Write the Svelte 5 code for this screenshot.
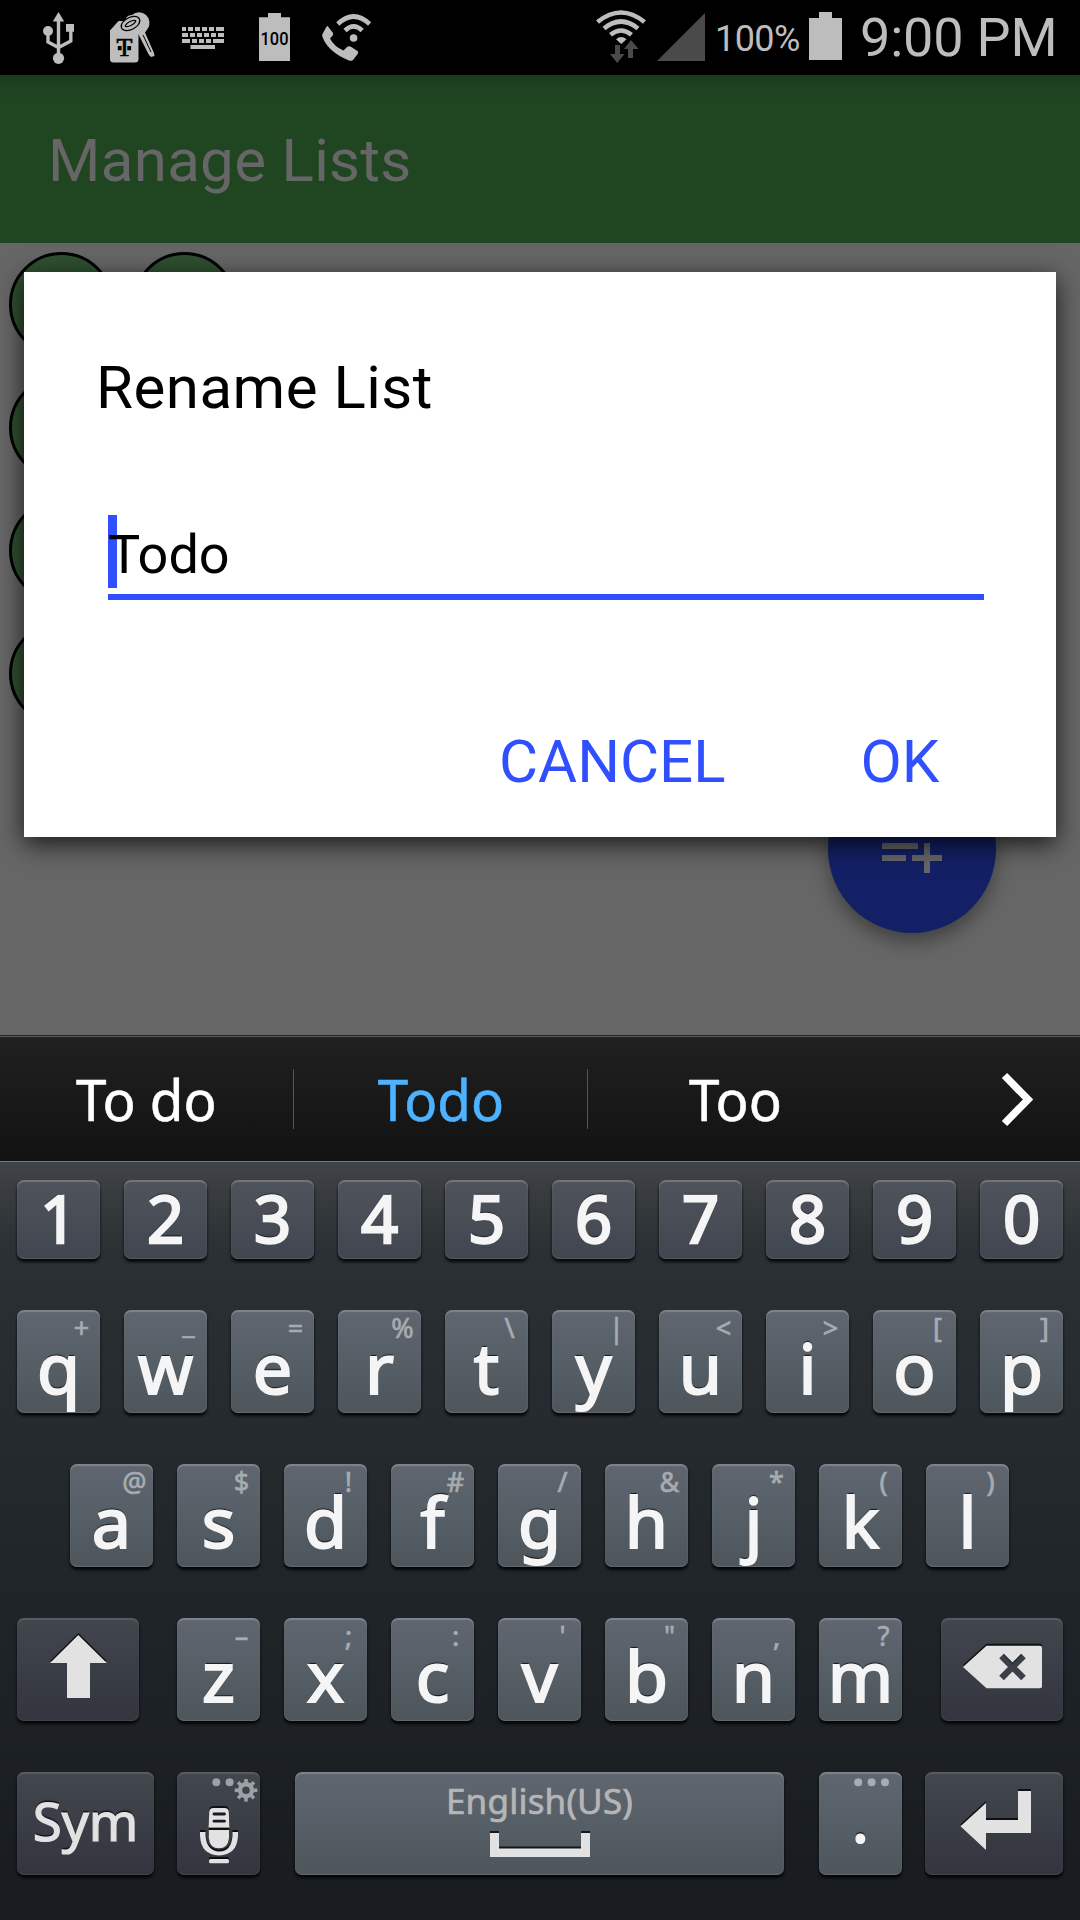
<script>
  const digits = ['1', '2', '3', '4', '5', '6', '7', '8', '9', '0'];
  const top = [['q', '+'], ['w', '_'], ['e', '='], ['r', '%'], ['t', '\\'], ['y', '|'], ['u', '<'], ['i', '>'], ['o', '['], ['p', ']']];
  const home = [['a', '@'], ['s', '$'], ['d', '!'], ['f', '#'], ['g', '/'], ['h', '&'], ['j', '*'], ['k', '('], ['l', ')']];
  const bottom = [['z', '–'], ['x', ';'], ['c', ':'], ['v', "'"], ['b', '"'], ['n', ','], ['m', '?']];
  const circles = [2, 1, 1, 1];
  const teeth = [0, 45, 90, 135, 180, 225, 270, 315];
</script>

{#snippet key(k)}
  <div class="key letter">
    <span class="hint" class:low={k[1] === '_'}>{k[1]}</span>
    <span class="glyph">{k[0]}</span>
  </div>
{/snippet}

<div class="screen">
  <header class="status">
    <svg class="usb" viewBox="42 11 33 54" width="33" height="54">
      <path class="fill" d="M58.5 12l5.7 9.5H52.8zM66 24h8v7.800h-8z" />
      <circle class="fill" cx="48" cy="31" r="5" />
      <circle class="fill" cx="58.5" cy="58.3" r="5.6" />
      <path class="line" d="M58.5 20v36M48 31v11l10.500 5.500L70.800 41V30" stroke-width="3.4" />
    </svg>
    <svg class="tag" viewBox="109 12 46 52" width="46" height="52">
      <path class="fill" d="M126 18q2-3 6-3a10.500 10.500 0 0 1 15.500 14l-2.500 3.500 9 20.500.5 3-3.500 1-2-2-11.500-22.500L131 31z" />
      <path d="M143 35l8 17" fill="none" stroke="#000" stroke-width="1" />
      <path class="fill" d="M118.500 21H130l8.500 7.500V59a3.500 3.500 0 0 1-3.500 3.500h-21.500a3.500 3.500 0 0 1-3.500-3.500V30.500z" />
      <g fill="none" transform="rotate(-28 130.500 23.500)">
        <ellipse cx="130.500" cy="23.500" rx="8" ry="4" stroke="#000" stroke-width="5.200" />
        <ellipse class="line" cx="130.500" cy="23.500" rx="8" ry="4" stroke-width="2.800" />
      </g>
      <text x="124.400" y="56.300" class="tee">T</text>
      <path d="M117.800 46h3.800v4.200h-3.800zM127.300 46h3.800v4.200h-3.800z" />
    </svg>
    <svg class="board" viewBox="182 26 42 24" width="42" height="24">
      <g class="line" stroke-width="4">
        <path d="M182 29h42" stroke-dasharray="4 2 5 2 5 2 5 2 5 2 8 9" />
        <path d="M182 35h42" stroke-dasharray="6 2 5 2 5 2 5 2 5 2 6 9" />
        <path d="M182 41h42" stroke-dasharray="8 2 5 2 5 2 5 2 11 9" />
        <path d="M190.500 47H215" />
      </g>
    </svg>
    <svg class="cell" viewBox="259 13 31 48" width="31" height="48">
      <path class="fill" d="M268 13h13v4.300h9V61h-31V17.300h9z" />
      <text x="274.500" y="45" class="charge" textLength="28" lengthAdjust="spacingAndGlyphs">100</text>
    </svg>
    <svg class="call" viewBox="321 13 52 49" width="52" height="49">
      <path class="fill" d="M328 26.500l5 6.500q.8 1.800-.8 3l-2.200 2.400q4 8 13.500 12l3.500-3.400q1.800-1.200 3.500-.4l7 4.400q1.200 1 .5 2.500l-5 6.500q-1.600 1.400-4 .5Q328 52 322.500 37q-1-2 .5-4l3.500-6.200q.8-1.200 1.500-.3z" />
      <circle class="fill" cx="353.600" cy="38" r="3.800" />
      <path class="line" d="M345 30.500q8.600-8.200 17.200 0M337.800 24q15.800-15 31.800 0" stroke-width="4.600" />
    </svg>
    <svg class="wifi" viewBox="595 9 52 55" width="52" height="55">
      <path class="line" d="M597.500 22q23.500-19 47 0M604 28.500q17-14 34 0M610.500 34.700q10.500-8.400 21 0" stroke-width="4.600" />
      <path class="fill" d="M616 39.200q5-4.200 10.500 0L621.200 44z" />
      <path fill="#4a4a4a" d="M615 45h5v9h4.500l-7.300 9-7.200-9h5zM631 40l7.500 9H633v9h-5v-9h-4z" />
    </svg>
    <svg class="signal" viewBox="657 13 48 48" width="48" height="48"><path fill="#4a4a4a" d="M657 61h48V13z" /></svg>
    <span class="percent">100%</span>
    <svg class="battery" viewBox="809 12 33 48" width="33" height="48"><path class="fill" d="M819 12h13v6h10v42h-33V18h10z" /></svg>
    <span class="clock">9:00 PM</span>
  </header>

  <div class="appbar">Manage Lists</div>

  <main class="content">
    <div class="swatches">
      {#each circles as n}
        <div class="swatch-row">
          {#each Array(n) as _}<div class="swatch"></div>{/each}
        </div>
      {/each}
    </div>
    <div class="fab">
      <svg viewBox="0 0 24 24" width="72" height="72"><path fill="#666" d="M14 10H2v2h12v-2zm0-4H2v2h12V6zm4 8v-4h-2v4h-4v2h4v4h2v-4h4v-2h-4zM2 16h8v-2H2v2z" /></svg>
    </div>
  </main>

  <section class="dialog">
    <h1>Rename List</h1>
    <div class="field"><i class="caret"></i><span>Todo</span></div>
    <div class="actions"><span>CANCEL</span><span>OK</span></div>
  </section>

  <div class="suggestions">
    <span><b>To do</b></span>
    <span class="active"><b>Todo</b></span>
    <span><b>Too</b></span>
    <svg viewBox="1000 1071 34 57" width="34" height="57"><path d="M1004.500 1075.500l23.500 24-23.500 24" fill="none" stroke="#fff" stroke-width="7.500" /></svg>
  </div>

  <div class="keyboard">
    <div class="row">
      {#each digits as d}<div class="key digit"><span class="glyph">{d}</span></div>{/each}
    </div>
    <div class="row">{#each top as k}{@render key(k)}{/each}</div>
    <div class="row home">{#each home as k}{@render key(k)}{/each}</div>
    <div class="row">
      <div class="key dark shift">
        <svg viewBox="17 1618 122 103" width="122" height="103">
          <path class="icon" d="M78.300 1635l28.500 28H90v35H67v-35H50z" />
        </svg>
      </div>
      {#each bottom as k}{@render key(k)}{/each}
      <div class="key dark erase">
        <svg viewBox="941 1618 122 103" width="122" height="103">
          <path class="icon" d="M986.500 1645.700H1040q2 0 2 2v38.600q0 2-2 2h-53.500L963 1667z" />
          <path d="M1001.500 1656l22 22m0-22l-22 22" stroke="#3b3f47" stroke-width="6.500" />
          <path d="M1003.500 1654.500l9 9 9-9" fill="none" stroke="#1c1f24" stroke-width="1.500" opacity=".5" />
        </svg>
      </div>
    </div>
    <div class="row">
      <div class="key dark sym"><span class="glyph">Sym</span></div>
      <div class="key dark mic">
        <svg viewBox="177 1772 83 103" width="83" height="103">
          <g fill="#9da0a4">
            <circle cx="216.300" cy="1782.300" r="4" />
            <circle cx="229.600" cy="1782.300" r="4" />
            {#each teeth as a}
              <rect x="244.200" y="1779" width="3.600" height="6" transform="rotate({a} 246 1790.300)" />
            {/each}
          </g>
          <circle cx="246" cy="1790.300" r="6" fill="none" stroke="#9da0a4" stroke-width="4.400" />
          <g class="icon">
            <path d="M213.500 1808h11q4 0 4.300 4l.6 15.400h-20.800l.6-15.400q.3-4 4.300-4zM208.800 1830H229v8q-1 10.300-10.100 10.300T208.800 1838z" />
            <path d="M200 1832h5.500v4q1.500 15 13.500 15.500t13.500-15.500v-4h5.500v4q-1 19-19 19.400-18-.4-19-19.400z" />
            <rect x="209" y="1859" width="20" height="4.200" rx="1.500" />
          </g>
          <path d="M214 1814h10.500M214 1821.200h10.500" stroke="#17191d" stroke-width="2.800" stroke-linecap="round" />
        </svg>
      </div>
      <div class="key space">
        <span>English(US)</span>
        <svg viewBox="490 1829 100 28" width="100" height="28"><path class="icon" d="M490 1833h9v15.500h82V1833h9v24H490z" /></svg>
      </div>
      <div class="key letter period">
        <svg viewBox="819 1772 83 20" width="83" height="20">
          <g fill="#a9adb1"><circle cx="858.200" cy="1782.300" r="4" /><circle cx="871.600" cy="1782.300" r="4" /><circle cx="885" cy="1782.300" r="4" /></g>
        </svg>
        <span class="glyph">.</span>
      </div>
      <div class="key dark enter">
        <svg viewBox="925 1772 138 103" width="138" height="103">
          <path class="icon" d="M1018 1791h13v42h-45v17l-25.500-23.700L986 1803v17h32z" />
        </svg>
      </div>
    </div>
  </div>
</div>

<style>
  :global(body) { margin: 0; background: #000; }
  .screen {
    position: relative;
    width: 1080px;
    height: 1920px;
    overflow: hidden;
    display: flex;
    flex-direction: column;
    font-family: Roboto, sans-serif;
  }
  svg { display: block; flex: none; overflow: visible; }
  .fill { fill: #bdbdbd; }
  .line { fill: none; stroke: #bdbdbd; }

  .status {
    height: 75px;
    flex: none;
    display: flex;
    align-items: flex-start;
    background: #000;
    color: #bdbdbd;
    white-space: nowrap;
  }
  .usb { margin: 11px 0 0 42px; }
  .tag { margin: 12px 0 0 34px; }
  .board { margin: 26px 0 0 27px; }
  .cell { margin: 13px 0 0 35px; }
  .call { margin: 13px 0 0 31px; }
  .wifi { margin: 9px 0 0 222px; }
  .signal { margin: 13px 0 0 10px; }
  .percent { width: 94px; margin-left: 10px; box-sizing: border-box; font-size: 36px; letter-spacing: -.6px; line-height: 79px; }
  .battery { margin: 12px 0 0 0; }
  .clock { margin-left: 18px; font-size: 54px; letter-spacing: -.2px; line-height: 75px; }
  .tee { font: 26px "Liberation Serif", serif; text-anchor: middle; fill: #000; stroke: #000; stroke-width: .7px; }
  .charge { font: 500 18px Roboto, sans-serif; text-anchor: middle; fill: #000; }

  .appbar {
    height: 168px;
    flex: none;
    box-sizing: border-box;
    padding-left: 48px;
    font-size: 60px;
    letter-spacing: .33px;
    line-height: 172px;
    color: #666;
    background: linear-gradient(#1b3a1d, #1e4320 12px, #1f4621 36px);
  }

  .content {
    position: relative;
    height: 793px;
    flex: none;
    background: #666;
  }
  .swatches { display: flex; flex-direction: column; gap: 18px; padding: 9px; }
  .swatch-row { display: flex; gap: 18px; }
  .swatch {
    width: 105px;
    height: 105px;
    box-sizing: border-box;
    border: 3px solid #000;
    border-radius: 50%;
    background: #2f5030;
  }
  .fab {
    position: absolute;
    left: 828px;
    top: 522px;
    width: 168px;
    height: 168px;
    border-radius: 50%;
    display: grid;
    place-items: center;
    background: #132065;
    box-shadow: 0 9px 18px rgba(0, 0, 0, .36);
  }

  .dialog {
    position: absolute;
    left: 24px;
    top: 272px;
    width: 1032px;
    height: 565px;
    box-sizing: border-box;
    padding-top: 80px;
    background: #fff;
    box-shadow: 0 7px 24px rgba(0, 0, 0, .75);
  }
  h1 { margin: 0 0 92px 72px; font-size: 60px; font-weight: 400; letter-spacing: .5px; line-height: 71px; color: #000; }
  .field {
    position: relative;
    width: 876px;
    height: 79px;
    margin-left: 84px;
    border-bottom: 6px solid #304ffe;
    font-size: 54px;
    line-height: 79px;
    color: #000;
  }
  .field span { position: relative; }
  .caret { position: absolute; left: 0; top: 0; width: 9px; height: 73px; background: #304ffe; }
  .actions { display: flex; gap: 135px; margin: 126px 0 0 475px; font-size: 60px; line-height: 71px; color: #304ffe; }

  .suggestions {
    height: 124px;
    flex: none;
    display: flex;
    align-items: center;
    border-top: 1px solid #5c5c5c;
    border-bottom: 1px solid #77787a;
    box-shadow: 0 -1px 0 #222;
    position: relative;
    background: linear-gradient(#202020, #121212);
    font-family: "Noto Sans", sans-serif;
    font-size: 57px;
    color: #fff;
  }
  .suggestions span {
    width: 294px;
    height: 60px;
    box-sizing: border-box;
    border-right: 1px solid #555;
    display: flex;
    justify-content: center;
    align-items: center;
  }
  .suggestions span:nth-child(3) { border-right: 0; }
  .suggestions b { font-weight: 400; white-space: nowrap; transform: scaleX(.96); -webkit-text-stroke: .6px currentColor; }
  .suggestions .active { color: #4db2ff; }
  .suggestions svg { margin-left: 118px; }

  .keyboard {
    flex: 1;
    display: flex;
    flex-direction: column;
    gap: 51px;
    padding-top: 18px;
    background: linear-gradient(#404347, #33383b 50px, #2b3034 90px, #202529 420px, #191d21 700px);
    font-family: "Noto Sans", sans-serif;
  }
  .row { display: flex; gap: 24px; padding-left: 17px; }
  .row.home { padding-left: 70px; }
  .key {
    position: relative;
    width: 83px;
    height: 103px;
    flex: none;
    border-radius: 7px;
    text-align: center;
    white-space: nowrap;
    color: #f5f5f5;
    background: linear-gradient(#5f6670, #565e66 50%, #4e565c);
    box-shadow: inset 0 2px 1px rgba(255, 255, 255, .2), inset 0 -1px 1px rgba(255, 255, 255, .12), 0 3px 3px rgba(0, 0, 0, .85);
  }
  .glyph {
    display: block;
    font-size: 70px;
    line-height: 115px;
    -webkit-text-stroke: 2px currentColor;
    text-shadow: 0 -2px 1px rgba(0, 0, 0, .75);
  }
  .digit { height: 79px; background: linear-gradient(#4f535c, #40464f); }
  .digit .glyph { font-size: 65px; line-height: 76px; -webkit-text-stroke-width: 2.4px; }
  .hint {
    position: absolute;
    right: 0;
    top: 0;
    width: 37px;
    font-size: 27px;
    line-height: 35px;
    color: #a6abb0;
    -webkit-text-stroke: .7px currentColor;
  }
  .hint.low { line-height: 27px; }
  .dark {
    color: #e2e2e2;
    background: linear-gradient(#42464d, #32353e);
    box-shadow: inset 0 2px 1px rgba(255, 255, 255, .12), inset 0 -1px 1px rgba(255, 255, 255, .08), 0 3px 3px rgba(0, 0, 0, .85);
  }
  .icon { fill: #e2e2e2; filter: drop-shadow(0 -2px 0 rgba(0, 0, 0, .75)); }
  .shift { width: 122px; margin-right: 14px; }
  .erase { width: 122px; margin-left: 15px; }
  .sym { width: 137px; margin-right: -1px; }
  .sym .glyph { font-size: 53px; line-height: 98px; -webkit-text-stroke-width: 1.2px; }
  .space {
    width: 489px;
    margin: 0 11px;
    display: flex;
    flex-direction: column;
    align-items: center;
    color: #b5b5b5;
    font-size: 35px;
    letter-spacing: .2px;
    line-height: 57px;
    -webkit-text-stroke: .7px currentColor;
  }
  .period .glyph { line-height: 48px; -webkit-text-stroke-width: 1.2px; }
  .enter { width: 138px; margin-left: -1px; }
</style>
